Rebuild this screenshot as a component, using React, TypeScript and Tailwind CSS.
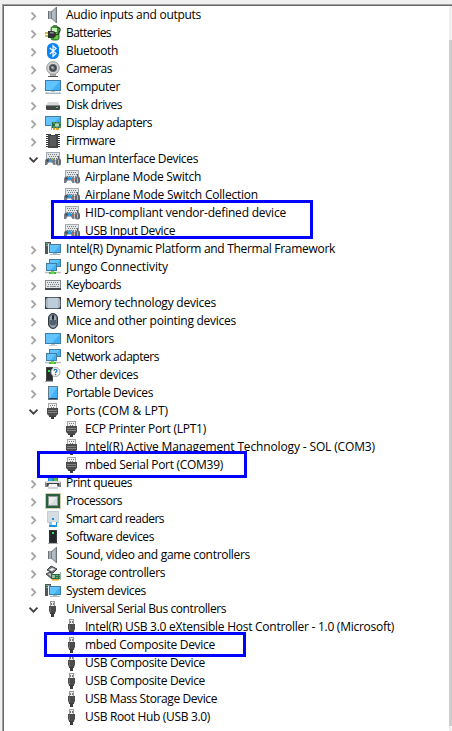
import { useLayoutEffect, useRef, useState, type ReactNode } from "react";

type IconName =
  | "speaker" | "battery" | "bluetooth" | "camera" | "computer" | "disk" | "display"
  | "chip" | "hid" | "system" | "network" | "keyboard" | "memory" | "mouse" | "monitor"
  | "other" | "portable" | "port" | "printer" | "cpu" | "smartcard" | "software"
  | "storage" | "usb";

const Screen = ({ x, y, w, h }: { x: number; y: number; w: number; h: number }) => (
  <g>
    <rect x={x} y={y} width={w} height={h} fill="#3f7da3" />
    <rect x={x + 1} y={y + 1} width={w - 2} height={h - 2} fill="#3fb0f8" />
    <path d={`M${x + 1} ${y + 1}h${w - 2}L${x + w / 2 - 1} ${y + h - 1}H${x + 1}z`} fill="#63c4fd" />
  </g>
);

const icons: Record<IconName, ReactNode> = {
  speaker: (
    <g>
      <rect x="3" y="4" width="4" height="8" fill="#69727a" />
      <rect x="4" y="4" width="2" height="8" fill="#a3abb1" />
      <path d="M6.500 4L11 0h1v16h-1L6.500 12z" fill="#8d979e" />
      <path d="M7 5L10.500 2V14L7 11z" fill="#b4bcc1" />
      <path d="M11 0h1v16h-1z" fill="#6c757c" />
    </g>
  ),
  battery: (
    <g>
      <rect x="8" y="0" width="4" height="2" fill="#6d7a68" />
      <rect x="6" y="1.500" width="8" height="13.500" rx="2" fill="#2f9e25" stroke="#447a3d" />
      <path d="M7 3h5v4H7z" fill="#c9f2bd" />
      <path d="M9 8h4v6H9z" fill="#62cb43" />
      <path d="M12 2.500c4 0 3.500 3 2 5-1 1.500-1 3-3 2" fill="none" stroke="#303030" strokeWidth="1.200" />
      <path d="M0 8h4M0 11h4" stroke="#b4a01c" strokeWidth="1.500" />
      <path d="M3 6h4c3 0 4 1.500 4 3.500S10 13 7 13H3z" fill="#303334" />
      <path d="M5 7h2c1.500 0 2 .5 2 1.500H5z" fill="#8d9291" />
    </g>
  ),
  bluetooth: (
    <g>
      <rect x="2" y="0" width="12" height="16" rx="5.500" fill="#0a84f5" />
      <path d="M4.800 5L11 10.600 8 13.300V2.700L11 5.400 4.800 11" fill="none" stroke="#fff" strokeWidth="1.200" />
    </g>
  ),
  camera: (
    <g>
      <path d="M3 15.500h10M5 14h6" stroke="#565656" strokeWidth="1" />
      <circle cx="8" cy="7" r="6.300" fill="#d3d5d6" stroke="#929596" strokeWidth="1" />
      <circle cx="8" cy="7" r="3.700" fill="#3d4247" stroke="#6a6f73" strokeWidth="1" />
      <circle cx="8" cy="7" r="1.800" fill="#838c99" />
      <circle cx="7.200" cy="6.200" r=".8" fill="#e8edf3" />
    </g>
  ),
  computer: (
    <g>
      <Screen x={0} y={1} w={16} h={11} />
      <path d="M6 12h4v1H6z" fill="#b9c2c9" />
      <path d="M1 13h14l1 2H0z" fill="#a3b4c2" />
      <path d="M2 13h12v1H2z" fill="#dce5ec" />
    </g>
  ),
  disk: (
    <g>
      <path d="M3 5h10l2 4H1z" fill="#d6d8da" />
      <rect x="1" y="8" width="14" height="5" rx="1" fill="#424446" />
      <rect x="1" y="8" width="14" height="1" fill="#85888a" />
      <rect x="11" y="10" width="2" height="1" fill="#35e455" />
    </g>
  ),
  display: (
    <g>
      <Screen x={0} y={1} w={16} h={10} />
      <rect x="7" y="7" width="9" height="6" fill="#276b43" />
      <path d="M8 8h8M8 12h8" stroke="#79b17e" strokeDasharray="2 1" />
      <rect x="10" y="8.500" width="4" height="3" fill="#b5d5bb" />
      <path d="M6.500 6v9" stroke="#a5adad" />
      <path d="M8 13h6v2H8z" fill="#e3a42e" />
      <path d="M10.500 13v2" stroke="#fff" strokeWidth=".7" />
    </g>
  ),
  chip: (
    <g>
      <path d="M2.500 1v14M13.500 1v14" stroke="#343434" strokeWidth="3" strokeDasharray="1 1" />
      <path d="M3 1h3v1h4V1h3v14H3z" fill="#454647" />
      <path d="M5 3h6v10H5z" fill="#595a5b" />
    </g>
  ),
  hid: (
    <g>
      <rect x="1" y="1" width="14" height="9" fill="#a5abb0" />
      <rect x="2" y="2" width="12" height="7" fill="#e3e6e8" />
      <path d="M3 3.500h10M4 5.500h9M3 7.500h10" stroke="#777f85" strokeDasharray="1 1" />
      <path d="M0 14V10.500C0 8 1.500 7 3 7.500h4C9 7 10.500 8 10.500 11v3h-2L7 11.500H3.500L2 14z" fill="#737c84" />
      <circle cx="2.500" cy="9.500" r="1.200" fill="#414a52" />
      <rect x="4" y="8" width="3" height="3" fill="#2c9be6" />
      <rect x="7" y="8" width="1" height="1" fill="#e8cb36" />
      <rect x="8" y="10" width="1" height="1" fill="#d45137" />
      <path d="M13.500 5v3" stroke="#595f64" />
      <rect x="11" y="7.500" width="5" height="7" rx="2" fill="#62686e" />
      <path d="M13.500 8.500v5" stroke="#aab1b7" />
    </g>
  ),
  system: (
    <g>
      <rect x="0" y="1" width="6" height="12" fill="#50575c" />
      <path d="M1 2.500h4M1 4.500h4" stroke="#929a9f" />
      <rect x="1" y="2" width="1" height="1" fill="#48d552" />
      <rect x="3" y="3" width="13" height="10" fill="#edf4f8" />
      <Screen x={4} y={3} w={12} h={9} />
      <path d="M8 12h4v1H8zM5 13h10v1H5z" fill="#acb8c2" />
    </g>
  ),
  network: (
    <g>
      <Screen x={4} y={0} w={12} h={8} />
      <Screen x={1} y={4} w={11} h={8} />
      <path d="M6 12h2v1H6z" fill="#789b79" />
      <path d="M0 13.500h16" stroke="#b8c1bd" strokeWidth="1.500" />
      <path d="M4 13h7v2H4z" fill="#46ba35" />
      <path d="M6 12h3v3H6z" fill="#68d450" />
    </g>
  ),
  keyboard: (
    <g>
      <rect x="0" y="3" width="16" height="9" fill="#858b91" />
      <rect x="1" y="4" width="14" height="7" fill="#e2e5e7" />
      <path d="M2 5.500h12M3 7.500h11" stroke="#7b8186" strokeDasharray="1 1" />
      <path d="M2 9.500h2m1 0h6m1 0h2" stroke="#899096" />
      <rect x="0" y="11" width="16" height="2" fill="#454b50" />
    </g>
  ),
  memory: (
    <g>
      <rect x="0" y="2" width="16" height="12" rx="1" fill="#59636b" />
      <path d="M1 3h14v10H1z" fill="#a9b8c3" />
      <path d="M3 3h10v10H3z" fill="#bdcdd9" />
      <path d="M0 2h3L0 5zM16 2h-3l3 3zM0 14h3l-3-3zM16 14h-3l3-3z" fill="#33393f" />
    </g>
  ),
  mouse: (
    <g>
      <rect x="3.500" y=".5" width="9" height="15" rx="4.500" fill="#687583" stroke="#30363d" />
      <path d="M5 4v6c0 3 1 4.500 3 4.500s3-1.500 3-4.500V4C10 2 6 2 5 4z" fill="#9ba8b5" />
      <path d="M5 7v4c1 2 5 2 6 0V7z" fill="#52606e" />
      <rect x="7" y="2" width="2" height="5" rx="1" fill="#23282e" />
    </g>
  ),
  monitor: (
    <g>
      <Screen x={0} y={2} w={16} h={11} />
      <path d="M6 13h4v1H6zM4 14h8v.7H4z" fill="#b8c6d0" />
    </g>
  ),
  other: (
    <g>
      <path d="M1 0h7v14H1z" fill="#44494c" />
      <path d="M2 1h5v12H2z" fill="#292d2f" />
      <rect x="3" y="3" width="2" height="2" fill="#30ed4b" />
      <path d="M0 14h8v1H0z" fill="#9ba0a2" />
      <circle cx="10.500" cy="5" r="4.500" fill="#f8fafb" stroke="#9ba3a9" />
      <path d="M9 3.800C9 2 12 2 12 3.700C12 4.900 10.500 4.700 10.500 6.200M10.500 7v1.200" fill="none" stroke="#1674bd" strokeWidth="1.200" />
    </g>
  ),
  portable: (
    <g>
      <rect x="3" y="1" width="10" height="14" fill="#60798d" />
      <rect x="4" y="2" width="8" height="11" fill="#42b0fa" />
      <path d="M4 2h8L5 13H4z" fill="#69c6fd" />
      <rect x="4" y="13" width="8" height="1" fill="#283c4b" />
    </g>
  ),
  port: (
    <g>
      <rect x="3" y="0" width="9" height="6" fill="#a6a6a6" />
      <rect x="4" y="1" width="7" height="4" fill="#f0f0f0" />
      <path d="M5 2.500h1m1 0h1m1 0h1M6 4.500h1m1 0h1" stroke="#777" />
      <path d="M2 5h11v6l-2 2H4l-2-2z" fill="#4c4c4c" />
      <path d="M3 7.500h9M3 9.500h9" stroke="#828282" />
      <path d="M4 13h7v1H9v2H6v-2H4z" fill="#3c3c3c" />
    </g>
  ),
  printer: (
    <g>
      <path d="M3 2h10v5H3z" fill="#2485d1" />
      <path d="M4 3h3v3H4z" fill="#1cb8cc" />
      <path d="M9 3h3v3H9z" fill="#61bb4b" />
      <path d="M1 6h14l1 2v4H0V8z" fill="#7e858a" />
      <path d="M1 6h14v2H1z" fill="#d9dddf" />
      <path d="M2 8h12v3H2z" fill="#3b4145" />
      <path d="M4 9h8l1 4H3z" fill="#f7f8f8" />
      <path d="M3 13h10" stroke="#a4aaad" />
      <path d="M14 8h1v1h-1z" fill="#4fd65c" />
    </g>
  ),
  cpu: (
    <g>
      <rect x=".5" y=".5" width="15" height="15" fill="none" stroke="#b09b55" strokeDasharray="1 1" />
      <rect x="1" y="1" width="14" height="14" fill="#286044" />
      <rect x="3" y="3" width="10" height="10" fill="#8f9a94" />
      <rect x="4" y="4" width="8" height="8" fill="#dadddc" />
      <path d="M4 4h8L4 12z" fill="#eceeed" />
    </g>
  ),
  smartcard: (
    <g>
      <rect x="2" y="0" width="12" height="12" rx="1" fill="#c3ced6" />
      <rect x="3" y="1" width="10" height="10" fill="#d5dde2" />
      <rect x="7" y="7" width="2" height="2" fill="#248ed5" />
      <rect x="4" y="11" width="8" height="5" fill="#1e91d9" />
      <path d="M7 11h4v3H7z" fill="#fff" />
      <path d="M4 11h3v3H4z" fill="#87c9ed" />
    </g>
  ),
  software: (
    <g>
      <rect x="4" y="1" width="8" height="13" fill="#35383a" />
      <rect x="5" y="2" width="6" height="11" fill="#242729" />
      <rect x="7" y="3" width="2" height="2" fill="#32e24b" />
      <path d="M3 14h10v1H3z" fill="#aaaeb1" />
    </g>
  ),
  storage: (
    <g>
      <path d="M2 5l4-4 6 3-4 4zM1 9l4-2 5 4-3 3z" fill="#777c7e" stroke="#404446" />
      <path d="M4 5l3-2 3 1-3 2z" fill="#f3f3f3" />
      <path d="M3 9l2-1 3 3-1 1z" fill="#c9cccd" />
      <path d="M6 9h10v5H6z" fill="#247349" />
      <path d="M7 10h3v3H7z" fill="#99bca1" />
      <path d="M11 10.500h4M11 12.500h4" stroke="#6eae76" strokeDasharray="2 1" />
      <path d="M7 14h7v1.500H7z" fill="#d7a238" />
      <path d="M15.500 7v8" stroke="#a6b1a9" />
    </g>
  ),
  usb: (
    <g>
      <rect x="5" y="0" width="5" height="6" fill="#9b9b9b" />
      <rect x="6" y="1" width="3" height="4" fill="#efefef" />
      <path d="M6 2h1v2H6zM8 2h1v2H8z" fill="#777" />
      <path d="M4 5h7v5l-1 2H5l-1-2z" fill="#4b4b4b" />
      <path d="M5 6h1v5H5z" fill="#6b6b6b" />
      <path d="M5 12h5v1H9v3H6v-3H5z" fill="#3c3c3c" />
    </g>
  ),
};

type Node = { label: string; icon: IconName; width: number; open?: boolean; child?: boolean };

const nodes: Node[] = [
  { label: "Audio inputs and outputs", icon: "speaker", width: 135 },
  { label: "Batteries", icon: "battery", width: 45 },
  { label: "Bluetooth", icon: "bluetooth", width: 52 },
  { label: "Cameras", icon: "camera", width: 46 },
  { label: "Computer", icon: "computer", width: 54 },
  { label: "Disk drives", icon: "disk", width: 56 },
  { label: "Display adapters", icon: "display", width: 86 },
  { label: "Firmware", icon: "chip", width: 49 },
  { label: "Human Interface Devices", icon: "hid", width: 132, open: true },
  { label: "Airplane Mode Switch", icon: "hid", width: 116, child: true },
  { label: "Airplane Mode Switch Collection", icon: "hid", width: 173, child: true },
  { label: "HID-compliant vendor-defined device", icon: "hid", width: 201, child: true },
  { label: "USB Input Device", icon: "hid", width: 90, child: true },
  { label: "Intel(R) Dynamic Platform and Thermal Framework", icon: "system", width: 269 },
  { label: "Jungo Connectivity", icon: "network", width: 102 },
  { label: "Keyboards", icon: "keyboard", width: 55 },
  { label: "Memory technology devices", icon: "memory", width: 150 },
  { label: "Mice and other pointing devices", icon: "mouse", width: 170 },
  { label: "Monitors", icon: "monitor", width: 48 },
  { label: "Network adapters", icon: "network", width: 93 },
  { label: "Other devices", icon: "other", width: 72 },
  { label: "Portable Devices", icon: "portable", width: 87 },
  { label: "Ports (COM & LPT)", icon: "port", width: 102, open: true },
  { label: "ECP Printer Port (LPT1)", icon: "port", width: 121, child: true },
  { label: "Intel(R) Active Management Technology - SOL (COM3)", icon: "port", width: 290, child: true },
  { label: "mbed Serial Port (COM39)", icon: "port", width: 138, child: true },
  { label: "Print queues", icon: "printer", width: 66 },
  { label: "Processors", icon: "cpu", width: 56 },
  { label: "Smart card readers", icon: "smartcard", width: 98 },
  { label: "Software devices", icon: "software", width: 88 },
  { label: "Sound, video and game controllers", icon: "speaker", width: 184 },
  { label: "Storage controllers", icon: "storage", width: 99 },
  { label: "System devices", icon: "system", width: 80 },
  { label: "Universal Serial Bus controllers", icon: "usb", width: 160, open: true },
  { label: "Intel(R) USB 3.0 eXtensible Host Controller - 1.0 (Microsoft)", icon: "usb", width: 309, child: true },
  { label: "mbed Composite Device", icon: "usb", width: 130, child: true },
  { label: "USB Composite Device", icon: "usb", width: 120, child: true },
  { label: "USB Composite Device", icon: "usb", width: 120, child: true },
  { label: "USB Mass Storage Device", icon: "usb", width: 132, child: true },
  { label: "USB Root Hub (USB 3.0)", icon: "usb", width: 125, child: true },
];

// Spreads the label's glyphs so that its line ends at the given width.
function Label({ text, width }: { text: string; width: number }) {
  const ref = useRef<HTMLSpanElement>(null);
  const [spacing, setSpacing] = useState(0);
  useLayoutEffect(() => {
    const el = ref.current;
    if (el) setSpacing((width - el.getBoundingClientRect().width) / text.length);
  }, [text, width]);
  return (
    <span ref={ref} className="whitespace-pre" style={{ letterSpacing: `${spacing}px` }}>
      {text}
    </span>
  );
}

function Row({ node }: { node: Node }) {
  return (
    <li className="flex h-[18px] items-center">
      <span className={node.child ? "w-[60px] shrink-0" : "w-[41px] shrink-0"}>
        {!node.child && (
          <svg className="ml-[25px] block" width="10" height="16" viewBox="0 0 10 16" fill="none">
            {node.open ? (
              <path d="M.500 6.700L4.500 10.700L8.500 6.700" stroke="#404040" strokeWidth="1.800" />
            ) : (
              <path d="M2.500 5.500L6.300 9.300L2.500 13.100" stroke="#a6a6a6" strokeWidth="1.800" />
            )}
          </svg>
        )}
      </span>
      <svg className="mr-[5px] block shrink-0" width="16" height="16" viewBox="0 0 16 16">
        {icons[node.icon]}
      </svg>
      <Label text={node.label} width={node.width} />
    </li>
  );
}

export default function App() {
  return (
    <div className="relative h-[731px] w-[452px] overflow-hidden bg-[#f0f0f0] pt-1 pl-0.5 font-['Open_Sans','Noto_Sans',sans-serif] text-[12px] leading-[18px] text-black">
      <div className="flex h-[727px] border-t border-l border-[#a0a0a0]">
        <div className="flex w-full border-t border-l border-[#696969]">
          <ul className="min-w-0 flex-1 bg-white">
            {nodes.map((node, i) => (
              <Row key={i} node={node} />
            ))}
          </ul>
          <div className="w-[3px] shrink-0 bg-[#f0f0f0] pt-[34px]">
            <div className="h-[686px] bg-[#cdcdcd]" />
          </div>
        </div>
      </div>
      <div className="absolute top-[200px] left-[51px] h-[39px] w-[262px] border-3 border-[#0000ff]" />
      <div className="absolute top-[451px] left-[37px] h-[27px] w-[210px] border-3 border-[#0000ff]" />
      <div className="absolute top-[632px] left-[44px] h-[25px] w-[202px] border-3 border-[#0000ff]" />
    </div>
  );
}
